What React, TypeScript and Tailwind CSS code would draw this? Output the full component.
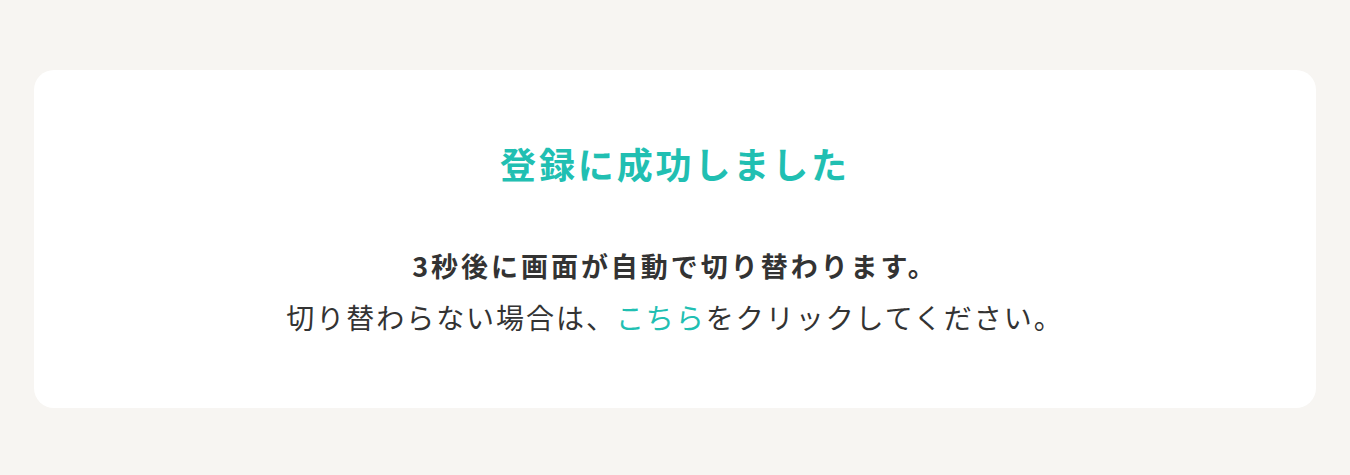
import React from 'react';

const font = { fontFamily: '"Noto Sans CJK JP", "Noto Sans", sans-serif' };

export default function App() {
  return (
    <div className="min-h-screen bg-[#f7f5f2] px-[34px] pt-[70px] pb-[67px]" style={font}>
      <div className="bg-white rounded-[20px] pt-[66px] pb-[66px] flex flex-col items-center text-center">
        <h1 className="text-[36px] leading-[54px] font-bold tracking-[0.08em] text-[#21bfb2]">
          登録に成功しました
        </h1>
        <div className="mt-[50px] text-[#333333]">
          <p className="text-[27px] leading-[52px] font-bold tracking-[0.11em]">
            3秒後に画面が自動で切り替わります。
          </p>
          <p className="text-[28px] leading-[50px] tracking-[0.07em]">
            切り替わらない場合は、
            <a href="#" className="text-[#21bfb2]">こちら</a>
            をクリックしてください。
          </p>
        </div>
      </div>
    </div>
  );
}
